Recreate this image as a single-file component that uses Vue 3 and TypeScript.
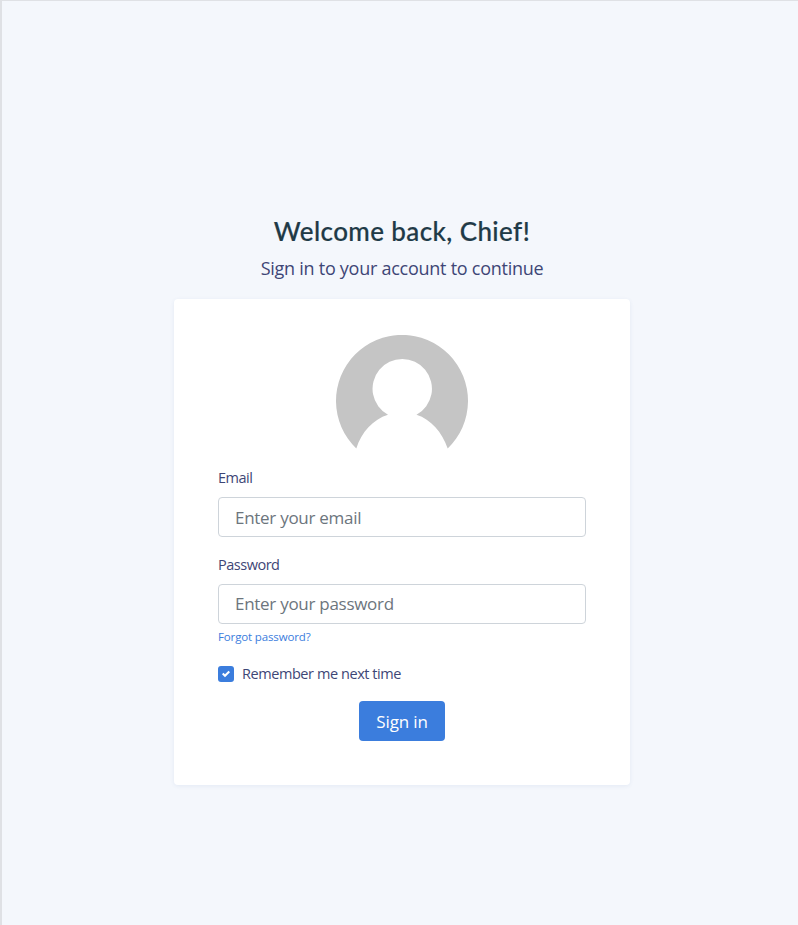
<script setup lang="ts">
import { ref } from 'vue'

const email = ref('')
const password = ref('')
const remember = ref(true)
</script>

<template>
  <main class="page">
    <header class="intro">
      <h1 class="title">Welcome back, Chief!</h1>
      <p class="lead">Sign in to your account to continue</p>
    </header>
    <section class="card">
      <svg class="avatar" viewBox="0 0 132 132" aria-hidden="true">
        <path
          fill="#c5c5c5"
          d="M20.3 113.5A66 66 0 1 1 111.7 113.5C106 97 95 84.500 80.500 79.800A29.700 29.700 0 1 0 52 79.800C37 84.500 25.500 97 20.300 113.500Z"
        />
      </svg>
      <form class="form" @submit.prevent>
        <label class="label email-label" for="email">Email</label>
        <input id="email" v-model="email" class="field" type="email" placeholder="Enter your email" />
        <label class="label password-label" for="password">Password</label>
        <input id="password" v-model="password" class="field password" type="password" placeholder="Enter your password" />
        <a class="forgot" href="#">Forgot password?</a>
        <label class="remember">
          <input v-model="remember" class="native" type="checkbox" />
          <span class="box">
            <svg v-if="remember" viewBox="0 0 8 8" width="8" height="8">
              <path fill="#fff" d="M6.564.75l-3.590 3.612-1.538-1.550L0 4.260l2.974 2.990L8 2.193z" />
            </svg>
          </span>
          <span class="remember-text">Remember me next time</span>
        </label>
        <button class="submit" type="submit">Sign in</button>
      </form>
    </section>
  </main>
</template>

<style>
body {
  background: #f4f7fc;
}
</style>

<style scoped>
.page {
  box-sizing: border-box;
  display: flex;
  flex-direction: column;
  align-items: center;
  min-height: 925px;
  padding: 213px 0 0 4px;
  border-top: 1px solid #dfe1e5;
  border-left: 2px solid #dfe1e5;
  background: #f4f7fc;
  color: #3e4676;
  font-family: "Open Sans", "Noto Sans", sans-serif;
}
.intro {
  text-align: center;
}
.title {
  margin: 0;
  color: #1f3a47;
  font: 500 26px/34px Lato, sans-serif;
  letter-spacing: 0.4px;
  -webkit-text-stroke: 0.2px #1f3a47;
}
.lead {
  margin: 5px 0 0;
  font-size: 18px;
  line-height: 30px;
  letter-spacing: -0.26px;
}
.card {
  box-sizing: border-box;
  display: flex;
  flex-direction: column;
  align-items: center;
  width: 456px;
  height: 486px;
  margin-top: 16px;
  padding: 36px 44px 44px;
  border-radius: 4px;
  background: #fff;
  box-shadow: 0 1px 4px rgba(41, 72, 152, 0.08);
}
.avatar {
  width: 132px;
  height: 132px;
}
.form {
  display: flex;
  flex-direction: column;
  width: 368px;
}
.label {
  height: 22px;
  font-size: 14.5px;
  line-height: 22px;
  letter-spacing: -0.48px;
}
.password-label {
  margin-top: 17px;
}
.field {
  box-sizing: border-box;
  width: 100%;
  height: 40px;
  margin: 8px 0 0;
  padding: 0 16px;
  border: 1px solid #ced4da;
  border-radius: 4px;
  outline: none;
  background: #fff;
  color: #3e4676;
  font-family: inherit;
  font-size: 17px;
  letter-spacing: -0.28px;
}
.password {
  padding-bottom: 2px;
}
.field::placeholder {
  color: #6c757d;
  opacity: 1;
}
.forgot {
  align-self: flex-start;
  margin-top: 4px;
  color: #3b7ddd;
  font-size: 11.5px;
  line-height: 18px;
  letter-spacing: -0.14px;
  text-decoration: none;
}
.remember {
  display: flex;
  align-items: center;
  gap: 8px;
  height: 22px;
  margin-top: 17px;
  font-size: 14.5px;
  line-height: 22px;
  letter-spacing: -0.43px;
}
.native {
  display: none;
}
.box {
  display: flex;
  align-items: center;
  justify-content: center;
  width: 16px;
  height: 16px;
  border-radius: 3px;
  background: #3b7ddd;
}
.submit {
  align-self: center;
  width: 86px;
  height: 40px;
  margin-top: 16px;
  padding: 0;
  border: 0;
  border-radius: 4px;
  background: #3b7ddd;
  color: #fff;
  font-family: inherit;
  font-size: 17px;
  letter-spacing: -0.15px;
}
</style>
